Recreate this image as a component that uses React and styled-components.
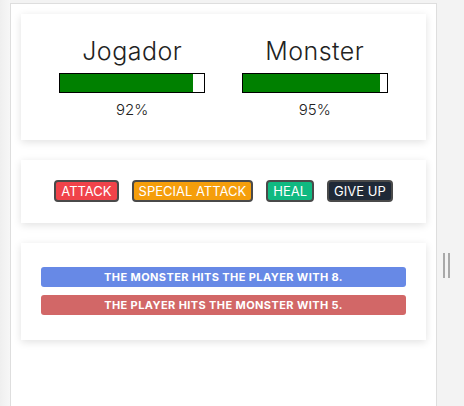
import React from "react";
import styled, { createGlobalStyle } from "styled-components";

const GlobalStyle = createGlobalStyle`
  html, body {
    margin: 0;
    padding: 0;
    height: 100%;
    overflow: hidden;
    background: #f3f3f3;
  }
  body {
    font-family: Inter, "Open Sans", sans-serif;
  }
`;

const Page = styled.div`
  display: flex;
  height: 406px;
  overflow: hidden;
  background: linear-gradient(90deg, #efefef 0px, #f7f7f7 10px, #f3f3f3 10px);
`;

const Column = styled.main`
  flex: none;
  margin: 3px 0 0 10px;
  width: 427px;
  height: 410px;
  padding: 10px;
  box-sizing: border-box;
  background: #fff;
  border: 1px solid #dedede;
  display: flex;
  flex-direction: column;
  gap: 20px;
`;

const Gutter = styled.div`
  flex: 1;
  display: flex;
  gap: 3px;
  padding: 253px 0 0 6px;
`;

const Grip = styled.span`
  width: 2px;
  height: 25px;
  background: #a9a9a9;
`;

const Card = styled.section`
  background: #fff;
  box-shadow: 0 2px 8px rgba(0, 0, 0, 0.12);
  padding: ${(p) => p.$pad || "20px"};
`;

const Scores = styled.div`
  display: flex;
`;

const Fighter = styled.div`
  flex: 1;
  display: flex;
  flex-direction: column;
  align-items: center;
`;

const Name = styled.h1`
  margin: 0;
  font-size: 25px;
  font-weight: 300;
  letter-spacing: 0.5px;
  color: #222;
  line-height: 34px;
`;

const Bar = styled.div`
  margin-top: 5px;
  width: 80%;
  height: 20px;
  box-sizing: border-box;
  border: 1px solid #000;
  background: #fff;
`;

const Fill = styled.div`
  height: 100%;
  background: #008000;
`;

const Percent = styled.p`
  margin: 7px 0 0;
  font-size: 15px;
  font-weight: 300;
  color: #222;
  line-height: 20px;
`;

const Actions = styled.div`
  display: flex;
  justify-content: center;
  gap: 13px;
`;

const Button = styled.button`
  height: 22px;
  padding: 0 5px;
  border: 2px solid #4a4a4a;
  border-radius: 4px;
  background: ${(p) => p.$bg};
  color: #fff;
  font-family: Inter, sans-serif;
  font-size: 13px;
  line-height: 18px;
  text-transform: uppercase;
  cursor: pointer;
`;

const Log = styled.ul`
  list-style: none;
  margin: 0;
  padding: 0;
  display: flex;
  flex-direction: column;
  gap: 8px;
`;

const Entry = styled.li`
  height: 20px;
  line-height: 20px;
  border-radius: 3px;
  background: ${(p) => (p.$monster ? "#6789e6" : "#d26767")};
  color: #fff;
  text-align: center;
  font-size: 11px;
  font-weight: 700;
  letter-spacing: 0.4px;
  text-transform: uppercase;
`;

const fighters = [
  { name: "Jogador", life: 92 },
  { name: "Monster", life: 95 },
];

const buttons = [
  { label: "Attack", bg: "#f0434a" },
  { label: "Special Attack", bg: "#f59e0b" },
  { label: "Heal", bg: "#10b981" },
  { label: "Give Up", bg: "#1f2937" },
];

const logs = [
  { text: "The monster hits the player with 8.", monster: true },
  { text: "The player hits the monster with 5.", monster: false },
];

export default function App() {
  return (
    <>
      <GlobalStyle />
      <Page>
        <Column>
          <Card>
            <Scores>
              {fighters.map((f) => (
                <Fighter key={f.name}>
                  <Name>{f.name}</Name>
                  <Bar>
                    <Fill style={{ width: `${f.life}%` }} />
                  </Bar>
                  <Percent>{f.life}%</Percent>
                </Fighter>
              ))}
            </Scores>
          </Card>
          <Card $pad="20px 20px 21px">
            <Actions>
              {buttons.map((b) => (
                <Button key={b.label} $bg={b.bg}>
                  {b.label}
                </Button>
              ))}
            </Actions>
          </Card>
          <Card $pad="24px 20px 25px">
            <Log>
              {logs.map((l) => (
                <Entry key={l.text} $monster={l.monster}>
                  {l.text}
                </Entry>
              ))}
            </Log>
          </Card>
        </Column>
        <Gutter>
          <Grip />
          <Grip />
        </Gutter>
      </Page>
    </>
  );
}
